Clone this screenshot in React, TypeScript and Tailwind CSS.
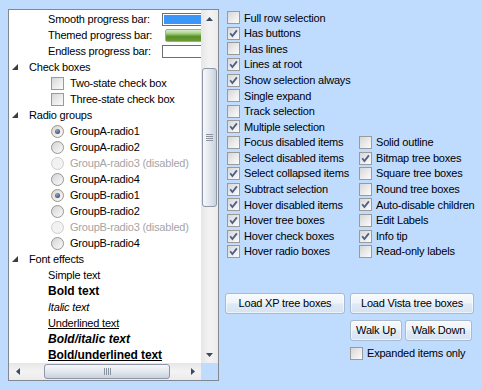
import React from 'react';

function Check({ checked = false }: { checked?: boolean }) {
  return (
    <span className="flex h-[13px] w-[13px] shrink-0 items-center justify-center border border-[#9a9a9a] bg-gradient-to-br from-[#d6d6d6] via-[#eaeaea] to-[#fbfbfb]">
      {checked && (
        <svg width="9" height="9" viewBox="0 0 9 9">
          <path d="M1.2 4.3 L3.4 7 L7.9 1.4" fill="none" stroke="#4b5f88" strokeWidth="1.8" />
        </svg>
      )}
    </span>
  );
}

function Radio({ on = false, disabled = false }: { on?: boolean; disabled?: boolean }) {
  let cls = 'border-[#949494] bg-gradient-to-br from-[#d4d4d4] to-[#fbfbfb]';
  if (disabled) cls = 'border-[#cdcdcd] bg-[#f2f2f2]';
  if (on) cls = 'border-[#9a9388] bg-gradient-to-br from-[#dcd6cc] to-[#fbfbfb]';
  return (
    <span className={`flex h-[13px] w-[13px] shrink-0 items-center justify-center rounded-full border ${cls}`}>
      {on && <span className="h-[5px] w-[5px] rounded-full bg-[radial-gradient(circle_at_40%_35%,#8aa6d8,#1b3163)]" />}
    </span>
  );
}

function Tri() {
  return (
    <svg width="6" height="6" viewBox="0 0 6 6" className="shrink-0">
      <polygon points="6,0 6,6 0,6" fill="#3c3c3c" />
    </svg>
  );
}

function Group({ label }: { label: string }) {
  return (
    <div className="flex h-4 items-center pl-[3px]">
      <Tri />
      <span className="ml-[11px]">{label}</span>
    </div>
  );
}

function Tree() {
  const radios: [string, boolean, boolean][] = [
    ['GroupA-radio1', true, false],
    ['GroupA-radio2', false, false],
    ['GroupA-radio3 (disabled)', false, true],
    ['GroupA-radio4', false, false],
    ['GroupB-radio1', true, false],
    ['GroupB-radio2', false, false],
    ['GroupB-radio3 (disabled)', false, true],
    ['GroupB-radio4', false, false],
  ];

  return (
    <div className="ml-[8px] mt-[9px] flex h-[372px] w-[211px] flex-col border border-[#828790] bg-white">
      <div className="flex h-[353px]">
        <div className="w-[192px] overflow-hidden whitespace-nowrap pt-px">
          {/* progress bars */}
          <div className="flex h-4 items-center pl-[39px]">
            <span className="w-[114px] shrink-0">Smooth progress bar:</span>
            <span className="h-[13px] w-[60px] shrink-0 border border-[#6e6e6e] bg-white p-px">
              <span className="block h-full w-full bg-[#3a97f9]" />
            </span>
          </div>
          <div className="flex h-4 items-center pl-[39px]">
            <span className="w-[114px] shrink-0">Themed progress bar:</span>
            <span className="ml-[3px] h-[13px] w-[60px] shrink-0 rounded-l-[2px] border border-[#9ea7b8] bg-[linear-gradient(to_bottom,#d8ecc9_0%,#a9d28a_30%,#76ab45_48%,#5b8d29_60%,#679b33_100%)]" />
          </div>
          <div className="flex h-4 items-center pl-[39px]">
            <span className="w-[114px] shrink-0">Endless progress bar:</span>
            <span className="h-[13px] w-[60px] shrink-0 border border-[#6e6e6e] bg-white" />
          </div>

          <Group label="Check boxes" />
          {['Two-state check box', 'Three-state check box'].map((t) => (
            <div key={t} className="flex h-4 items-center pl-[42px]">
              <Check />
              <span className="ml-[6px]">{t}</span>
            </div>
          ))}

          <Group label="Radio groups" />
          {radios.map(([t, on, dis]) => (
            <div key={t} className="flex h-4 items-center pl-[42px]">
              <Radio on={on} disabled={dis} />
              <span className={`ml-[6px] ${dis ? 'text-[#a5a5a5]' : ''}`}>{t}</span>
            </div>
          ))}

          <Group label="Font effects" />
          <div className="flex h-4 items-center pl-[39px]">Simple text</div>
          <div className="flex h-4 items-center pl-[39px] text-[12px] font-bold tracking-normal">Bold text</div>
          <div className="flex h-4 items-center pl-[39px] italic">Italic text</div>
          <div className="flex h-4 items-center pl-[39px] underline">Underlined text</div>
          <div className="flex h-4 items-center pl-[39px] text-[12px] font-bold italic tracking-normal">Bold/italic text</div>
          <div className="flex h-4 items-center pl-[39px] text-[12px] font-bold tracking-[-0.1px] underline">Bold/underlined text</div>
        </div>

        {/* vertical scrollbar */}
        <div className="flex w-[17px] flex-col bg-gradient-to-r from-[#e6e6e6] via-[#f3f3f3] to-[#ebebeb]">
          <div className="flex h-[17px] items-center justify-center">
            <svg width="7" height="4" viewBox="0 0 7 4">
              <polygon points="3.5,0 7,4 0,4" fill="#3b4a63" />
            </svg>
          </div>
          <div className="flex-1">
            <div className="mx-px mt-[41px] flex h-[139px] flex-col items-center justify-center gap-px rounded-[3px] border border-[#8d97a8] bg-gradient-to-r from-[#f6f7f9] via-[#e4e8ee] to-[#c7d1dd]">
              <span className="h-px w-[7px] bg-[#8b93a1]" />
              <span className="h-px w-[7px] bg-[#8b93a1]" />
              <span className="h-px w-[7px] bg-[#8b93a1]" />
              <span className="h-px w-[7px] bg-[#8b93a1]" />
            </div>
          </div>
          <div className="flex h-[17px] items-center justify-center">
            <svg width="7" height="4" viewBox="0 0 7 4">
              <polygon points="0,0 7,0 3.5,4" fill="#3b4a63" />
            </svg>
          </div>
        </div>
      </div>

      {/* horizontal scrollbar */}
      <div className="flex h-[17px]">
        <div className="flex flex-1 bg-gradient-to-b from-[#e6e6e6] via-[#f3f3f3] to-[#ebebeb]">
          <div className="flex w-[17px] items-center justify-center">
            <svg width="4" height="7" viewBox="0 0 4 7">
              <polygon points="0,3.5 4,0 4,7" fill="#3b4a63" />
            </svg>
          </div>
          <div className="flex-1">
            <div className="ml-[18px] my-px flex h-[15px] w-[126px] items-center justify-center gap-px rounded-[3px] border border-[#8d97a8] bg-gradient-to-b from-[#f6f7f9] via-[#e4e8ee] to-[#c7d1dd]">
              <span className="h-[7px] w-px bg-[#8b93a1]" />
              <span className="h-[7px] w-px bg-[#8b93a1]" />
              <span className="h-[7px] w-px bg-[#8b93a1]" />
              <span className="h-[7px] w-px bg-[#8b93a1]" />
            </div>
          </div>
          <div className="flex w-[17px] items-center justify-center">
            <svg width="4" height="7" viewBox="0 0 4 7">
              <polygon points="0,0 4,3.5 0,7" fill="#3b4a63" />
            </svg>
          </div>
        </div>
        <div className="w-[17px] bg-[#bfdbfe]" />
      </div>
    </div>
  );
}

function Option({ label, checked }: { label: string; checked: boolean }) {
  return (
    <div className="flex h-[15.6px] items-center whitespace-nowrap">
      <Check checked={checked} />
      <span className="ml-[4px]">{label}</span>
    </div>
  );
}

function Button({ label, width }: { label: string; width: string }) {
  return (
    <button
      className={`flex h-[21px] ${width} items-center justify-center rounded-[3px] border border-[#a7bad0] bg-[linear-gradient(to_bottom,#f7fafd_0%,#eef4fa_48%,#dfeaf6_52%,#d5e3f3_100%)] shadow-[inset_0_0_0_1px_rgba(255,255,255,0.6)]`}
    >
      {label}
    </button>
  );
}

function Options() {
  const single: [string, boolean][] = [
    ['Full row selection', false],
    ['Has buttons', true],
    ['Has lines', false],
    ['Lines at root', true],
    ['Show selection always', true],
    ['Single expand', false],
    ['Track selection', false],
    ['Multiple selection', true],
  ];
  const pairs: [string, boolean, string, boolean][] = [
    ['Focus disabled items', false, 'Solid outline', false],
    ['Select disabled items', false, 'Bitmap tree boxes', true],
    ['Select collapsed items', true, 'Square tree boxes', false],
    ['Subtract selection', true, 'Round tree boxes', false],
    ['Hover disabled items', true, 'Auto-disable children', true],
    ['Hover tree boxes', true, 'Edit Labels', false],
    ['Hover check boxes', true, 'Info tip', true],
    ['Hover radio boxes', true, 'Read-only labels', false],
  ];

  return (
    <div className="flex flex-col pl-[8px] pt-[10px]">
      {single.map(([l, c]) => (
        <Option key={l} label={l} checked={c} />
      ))}
      {pairs.map(([a, ac, b, bc]) => (
        <div key={a} className="flex">
          <div className="w-[132px]">
            <Option label={a} checked={ac} />
          </div>
          <Option label={b} checked={bc} />
        </div>
      ))}

      <div className="-ml-[2px] mt-[33.4px] flex gap-[5px]">
        <Button label="Load XP tree boxes" width="w-[120px]" />
        <Button label="Load Vista tree boxes" width="w-[124px]" />
      </div>
      <div className="ml-[123px] mt-[6px] flex gap-[3px]">
        <Button label="Walk Up" width="w-[52px]" />
        <Button label="Walk Down" width="w-[67px]" />
      </div>
      <div className="ml-[123px] mt-[6px] flex h-[13px] items-center whitespace-nowrap">
        <Check />
        <span className="ml-[4px]">Expanded items only</span>
      </div>
    </div>
  );
}

export default function App() {
  return (
    <div className="flex h-[390px] w-[482px] bg-[#bfdbfe] text-[11px] tracking-[-0.2px] text-black [font-family:'Liberation_Sans',Arial,sans-serif]">
      <Tree />
      <Options />
    </div>
  );
}
